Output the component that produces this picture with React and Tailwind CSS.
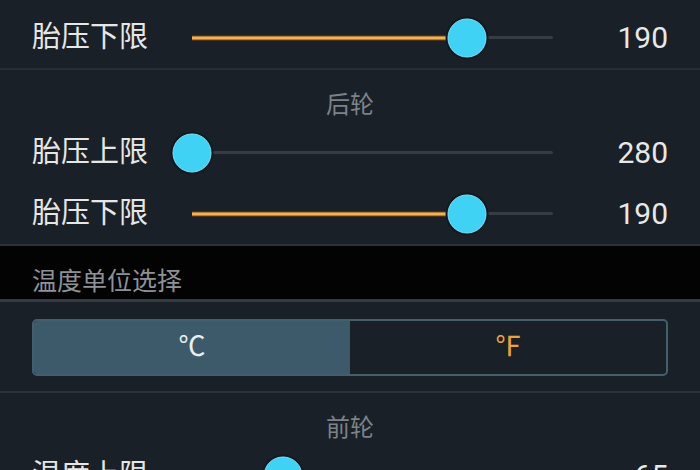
import React from "react";

const FONT = { fontFamily: '"Roboto", "Noto Sans CJK SC", sans-serif' };

function Slider({ value }) {
  const pct = value * 100;
  return (
    <div className="relative h-[40px] w-[401px] px-[20px] flex items-center">
      <div className="relative h-[40px] w-full flex items-center">
        <div className="h-[3px] w-full bg-[#363c43] rounded-full" />
        <div
          className="absolute left-0 top-1/2 -translate-y-1/2 h-[5px] bg-[linear-gradient(to_bottom,#7a3f0c,#e9a548_35%,#f6d28e_50%,#e9a548_65%,#7a3f0c)]"
          style={{ width: `${pct}%` }}
        />
        <div
          className="absolute top-1/2 -translate-x-1/2 -translate-y-1/2 w-[39px] h-[39px] rounded-full bg-[#40d2f4] border-[1px] border-[#7fe3f8] shadow-[0_0_0_2px_#101a22]"
          style={{ left: `${pct}%` }}
        />
      </div>
    </div>
  );
}

function Row({ label, value, pos }) {
  return (
    <div className="h-[61px] flex items-center px-[32px]">
      <div className="w-[140px] text-[29px] leading-none text-[#e6e6e6]">{label}</div>
      <Slider value={pos} />
      <div className="flex-1 text-right text-[30px] leading-none text-[#e8e8e8]">{value}</div>
    </div>
  );
}

function Header({ children }) {
  return (
    <div className="h-[52px] pt-[20px] text-center text-[24px] leading-[30px] text-[#7c8288]">
      {children}
    </div>
  );
}

export default function App() {
  return (
    <div className="w-[700px] h-[470px] overflow-hidden bg-[#1a2027]" style={FONT}>
      <div className="pt-[7px]">
        <Row label="胎压下限" value="190" pos={0.762} />
        <div className="h-[2px] bg-[#262d35]" />
        <Header>后轮</Header>
        <Row label="胎压上限" value="280" pos={0} />
        <Row label="胎压下限" value="190" pos={0.762} />
        <div className="h-[2px] bg-[#2a323a]" />
        <div className="h-[53px] bg-[#030303] pl-[32px] pt-[21px] text-[25px] leading-[30px] text-[#8e9196]">
          温度单位选择
        </div>
        <div className="h-[3px] bg-[#323a42]" />
        <div className="px-[32px] pt-[17px] pb-[15px]">
          <div className="h-[57px] flex rounded-[5px] border-[2px] border-[#445e6c] overflow-hidden">
            <div className="flex-1 bg-[#3c5a6a] flex items-center justify-center text-[27px] text-[#e8eef2]">
              ℃
            </div>
            <div className="flex-1 flex items-center justify-center text-[27px] text-[#eda23a]">
              ℉
            </div>
          </div>
        </div>
        <div className="h-[2px] bg-[#2a3139]" />
        <Header>前轮</Header>
        <Row label="温度上限" value="65" pos={0.252} />
      </div>
    </div>
  );
}
